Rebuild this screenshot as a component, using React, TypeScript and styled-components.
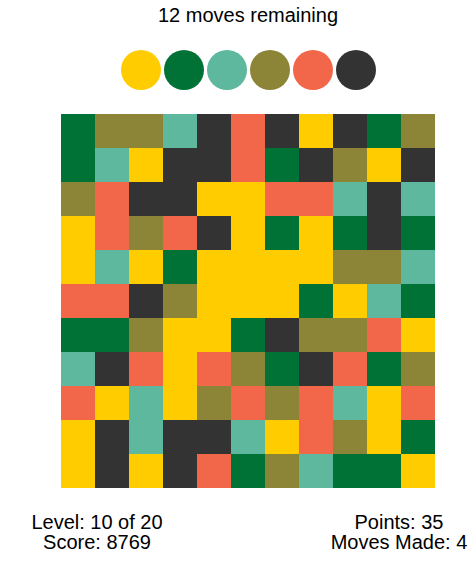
import React from "react";
import styled, { createGlobalStyle } from "styled-components";

const GlobalStyle = createGlobalStyle`
  html, body {
    margin: 0;
    padding: 0;
    background: #ffffff;
    overflow: hidden;
  }
  body {
    font-family: "Liberation Sans", Arial, sans-serif;
    color: #000000;
  }
`;

const COLORS: Record<string, string> = {
  Y: "#ffcc00",
  G: "#007236",
  T: "#5db89e",
  O: "#8c8437",
  R: "#f26649",
  D: "#333333",
};

const ROWS = [
  "GOOTDRDYDGO",
  "GTYDDRGDOYD",
  "ORDDYYRRTDT",
  "YRORDYGYGDG",
  "YTYGYYYYOOT",
  "RRDOYYYGYTG",
  "GGOYYGDOORY",
  "TDRYROGDRGO",
  "RYTYORORTYR",
  "YDTDDTYROYG",
  "YDYDRGOTGGY",
];

const PALETTE = ["Y", "G", "T", "O", "R", "D"];

const Page = styled.div`
  width: 476px;
  box-sizing: border-box;
  padding: 4px 0 0 20px;
  display: flex;
  flex-direction: column;
  align-items: center;
`;

const Title = styled.div`
  font-size: 20px;
  line-height: 23px;
  text-align: center;
`;

const Swatches = styled.div`
  display: flex;
  gap: 3px;
  margin-top: 23px;
`;

const Swatch = styled.div<{ $color: string }>`
  width: 40px;
  height: 40px;
  border-radius: 50%;
  background: ${(p) => p.$color};
`;

const Board = styled.div`
  display: grid;
  grid-template-columns: repeat(11, 34px);
  grid-auto-rows: 34px;
  margin-top: 24px;
`;

const Cell = styled.div<{ $color: string }>`
  background: ${(p) => p.$color};
`;

const Footer = styled.div`
  width: 452px;
  display: flex;
  justify-content: space-between;
  margin-top: 24px;
`;

const Stats = styled.div`
  width: 150px;
  font-size: 20px;
  line-height: 20px;
  text-align: center;
  white-space: nowrap;
`;

export default function App() {
  return (
    <>
      <GlobalStyle />
      <Page>
        <Title>12 moves remaining</Title>
        <Swatches>
          {PALETTE.map((k) => (
            <Swatch key={k} $color={COLORS[k]} />
          ))}
        </Swatches>
        <Board>
          {ROWS.map((row, r) =>
            row
              .split("")
              .map((k, c) => <Cell key={`${r}-${c}`} $color={COLORS[k]} />)
          )}
        </Board>
        <Footer>
          <Stats>
            Level: 10 of 20
            <br />
            Score: 8769
          </Stats>
          <Stats>
            Points: 35
            <br />
            Moves Made: 4
          </Stats>
        </Footer>
      </Page>
    </>
  );
}
